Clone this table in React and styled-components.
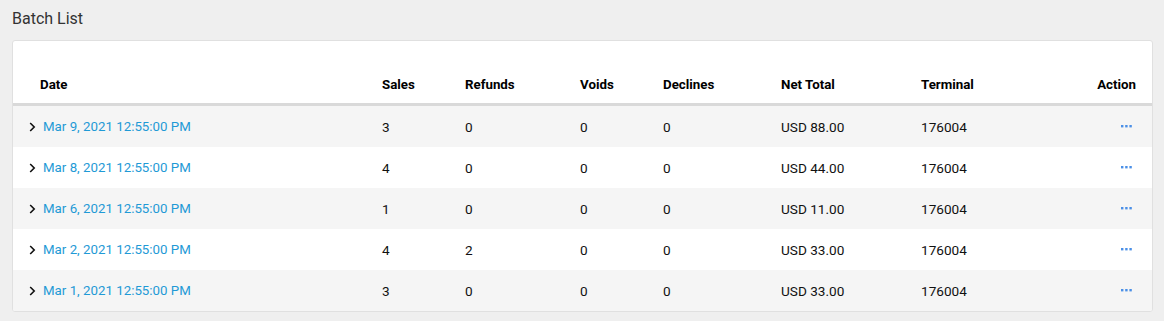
import React from 'react'
import styled, { createGlobalStyle } from 'styled-components'

const GlobalStyle = createGlobalStyle`
    body {
        margin: 0;
        background: #efefef;
        font-family: Roboto, "Liberation Sans", sans-serif;
        color: #111;
    }
`;

const batches = [
    { date: 'Mar 9, 2021 12:55:00 PM', sales: 3, refunds: 0, voids: 0, declines: 0, net: 'USD 88.00', terminal: '176004' },
    { date: 'Mar 8, 2021 12:55:00 PM', sales: 4, refunds: 0, voids: 0, declines: 0, net: 'USD 44.00', terminal: '176004' },
    { date: 'Mar 6, 2021 12:55:00 PM', sales: 1, refunds: 0, voids: 0, declines: 0, net: 'USD 11.00', terminal: '176004' },
    { date: 'Mar 2, 2021 12:55:00 PM', sales: 4, refunds: 2, voids: 0, declines: 0, net: 'USD 33.00', terminal: '176004' },
    { date: 'Mar 1, 2021 12:55:00 PM', sales: 3, refunds: 0, voids: 0, declines: 0, net: 'USD 33.00', terminal: '176004' },
];

function Chevron() {
    return (
        <svg width="7" height="10" viewBox="0 0 7 10">
            <path d="M1.2 1 L5.2 5 L1.2 9" fill="none" stroke="#111" strokeWidth="1.6" />
        </svg>
    )
}

function Dots() {
    return (
        <svg width="11" height="3" viewBox="0 0 11 3">
            <rect x="0" y="0" width="2.4" height="2.4" fill="#4a8fe7" />
            <rect x="4.2" y="0" width="2.4" height="2.4" fill="#4a8fe7" />
            <rect x="8.4" y="0" width="2.4" height="2.4" fill="#4a8fe7" />
        </svg>
    )
}

function App() {
    return (
        <Page>
            <GlobalStyle />
            <Title>Batch List</Title>
            <Card>
                <HeadRow>
                    <HeadCell first>Date</HeadCell>
                    <HeadCell>Sales</HeadCell>
                    <HeadCell>Refunds</HeadCell>
                    <HeadCell>Voids</HeadCell>
                    <HeadCell>Declines</HeadCell>
                    <HeadCell>Net Total</HeadCell>
                    <HeadCell>Terminal</HeadCell>
                    <HeadCell right>Action</HeadCell>
                </HeadRow>
                {batches.map((b, i) => (
                    <Row key={i} striped={i % 2 === 0}>
                        <DateCell>
                            <Chevron />
                            <DateLink>{b.date}</DateLink>
                        </DateCell>
                        <Cell>{b.sales}</Cell>
                        <Cell>{b.refunds}</Cell>
                        <Cell>{b.voids}</Cell>
                        <Cell>{b.declines}</Cell>
                        <Cell>{b.net}</Cell>
                        <Cell>{b.terminal}</Cell>
                        <Cell right><ActionButton><Dots /></ActionButton></Cell>
                    </Row>
                ))}
            </Card>
        </Page>
    )
}

export default App

const columns = '359px 83px 115px 83px 118px 140px 1fr 120px';

const Page = styled.div`
    padding: 9px 11px 10px 12px;
`;

const Title = styled.h2`
    margin: 0 0 11px 0;
    font-size: 16px;
    font-weight: 400;
    line-height: 20px;
    color: #333;
`;

const Card = styled.div`
    background: #fff;
    border: 1px solid #e0e0e0;
    border-radius: 3px;
    overflow: hidden;
`;

const HeadRow = styled.div`
    display: grid;
    grid-template-columns: ${columns};
    height: 62px;
    align-items: end;
    border-bottom: 3px solid #d9d9d9;
`;

const HeadCell = styled.div`
    font-size: 13.3px;
    font-weight: 700;
    line-height: 16px;
    padding: 0 ${p => (p.right ? '16px' : '10px')} 10px ${p => (p.first ? '27px' : '10px')};
    text-align: ${p => (p.right ? 'right' : 'left')};
    color: #000;
`;

const Row = styled.div`
    display: grid;
    grid-template-columns: ${columns};
    height: 41px;
    box-sizing: border-box;
    padding-bottom: 0px;
    align-items: center;
    background: ${p => (p.striped ? '#f5f5f5' : '#fff')};
`;

const Cell = styled.div`
    font-size: 13.6px;
    line-height: 16px;
    padding: 0 ${p => (p.right ? '20px' : '10px')} 0 10px;
    display: flex;
    justify-content: ${p => (p.right ? 'flex-end' : 'flex-start')};
    color: #111;
`;

const DateCell = styled.div`
    display: flex;
    align-items: center;
    gap: 7px;
    padding-left: 16px;
`;

const DateLink = styled.a`
    font-size: 13.3px;
    line-height: 16px;
    color: #1f9ad6;
    text-decoration: none;
    cursor: pointer;
`;

const ActionButton = styled.span`
    display: inline-flex;
    align-items: center;
    cursor: pointer;
`;
